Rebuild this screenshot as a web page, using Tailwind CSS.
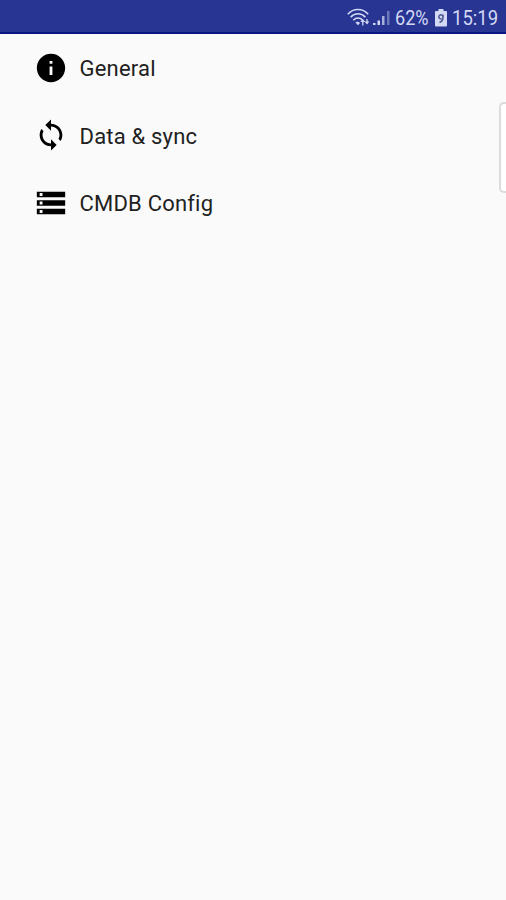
<!DOCTYPE html>
<html lang="en">
<head>
  <meta charset="UTF-8">
  <meta name="viewport" content="width=device-width, initial-scale=1.0">
  <title>Settings</title>
  <script src="https://cdn.jsdelivr.net/npm/@tailwindcss/browser@4"></script>
</head>
<body class="bg-[#fafafa] font-['Roboto',sans-serif] h-screen overflow-hidden relative">

<!-- Status bar -->
<header class="h-[34px] bg-[#283593] border-b-2 border-[#0c1482] flex items-center justify-end pr-2 pt-1 text-[#d3d9f4]">
  <svg class="w-[24px] h-[20px] mr-[2px]" viewBox="0 0 24 20" fill="none" stroke="currentColor" stroke-width="1.6">
    <path d="M.8 6.200C6.500 0 15.500 0 21.200 6.200" />
    <path d="M3.600 9.200c4.200-4.600 10.600-4.600 14.800 0" />
    <path d="M6.300 12.200c2.600-2.900 6.800-2.900 9.400 0" />
    <path d="M8.300 14.300L11 17.300l2-2.200c-1-1.500-3.300-1.800-4.700-.8z" fill="currentColor" stroke="none" />
    <path d="M13.300 14l2.500-3 2.500 3zM17.600 13.500h4.800L20 16.500z" fill="currentColor" stroke="none" />
    <path d="M15.800 13v4.500M20 11v3" stroke-width="1.300" />
  </svg>
  <svg class="w-[18px] h-[18px] mr-[4px]" viewBox="0 0 18 18" fill="currentColor">
    <path d="M0 14h2.500v2H0zM4.500 11.500h2.500V16H4.500z" />
    <path d="M9 7h2.500v9H9z" opacity=".75" />
    <path d="M14 2h2.500v14H14z" opacity=".4" />
  </svg>
  <span class="text-[21px] leading-none w-[35px] whitespace-nowrap"><span class="inline-block origin-left scale-x-[.86]">62%</span></span>
  <svg class="w-[12px] h-[18px] ml-[5px] mr-[5px]" viewBox="0 0 12 18">
    <path d="M3.500 0h5v2H11a1 1 0 0 1 1 1v13.500a1 1 0 0 1-1 1H1a1 1 0 0 1-1-1V3a1 1 0 0 1 1-1h2.500z" fill="currentColor" />
    <path d="M7.800 7.500a2 2 0 1 0-1.200 2.200M8 5.500v3c0 2.500-1 4-3.500 5" fill="none" stroke="#4c568f" stroke-width="1.500" />
  </svg>
  <span class="text-[21px] leading-none w-[46px] whitespace-nowrap"><span class="inline-block origin-left scale-x-[.88]">15:19</span></span>
</header>

<!-- Settings list -->
<nav class="pl-[34px] text-[22px] tracking-[.2px] text-[#212121]">
  <a href="#" class="flex items-center gap-[11.500px] h-[67.500px]">
    <svg class="w-[34px] h-[34px] text-black" viewBox="0 0 24 24" fill="currentColor">
      <path d="M12 2C6.480 2 2 6.480 2 12s4.480 10 10 10 10-4.480 10-10S17.520 2 12 2zm1 15h-2v-6h2v6zm0-8h-2V7h2v2z" />
    </svg>
    <span class="pt-0.5">General</span>
  </a>
  <a href="#" class="flex items-center gap-[11.500px] h-[67.500px]">
    <svg class="w-[34px] h-[34px] text-black" viewBox="0 0 24 24" fill="currentColor">
      <path d="M12 4V1L8 5l4 4V6c3.310 0 6 2.690 6 6 0 1.010-.25 1.970-.7 2.800l1.460 1.460C19.540 15.030 20 13.570 20 12c0-4.420-3.580-8-8-8zm0 14c-3.310 0-6-2.690-6-6 0-1.010.25-1.970.7-2.800L5.240 7.740C4.460 8.970 4 10.430 4 12c0 4.420 3.580 8 8 8v3l4-4-4-4v3z" />
    </svg>
    <span class="pt-0.5">Data &amp; sync</span>
  </a>
  <a href="#" class="flex items-center gap-[11.500px] h-[67.500px]">
    <svg class="w-[34px] h-[34px] text-black" viewBox="0 0 24 24" fill="currentColor">
      <path d="M2 20h20v-4H2v4zm2-3h2v2H4v-2zM2 4v4h20V4H2zm4 3H4V5h2v2zm-4 7h20v-4H2v4zm2-3h2v2H4v-2z" />
    </svg>
    <span class="pt-0.5">CMDB Config</span>
  </a>
</nav>

<!-- Edge panel handle -->
<div class="absolute right-0 top-[102px] w-[7px] h-[91px] bg-white border-2 border-r-0 border-[#dcdcdc] rounded-l-[5px]"></div>

</body>
</html>
